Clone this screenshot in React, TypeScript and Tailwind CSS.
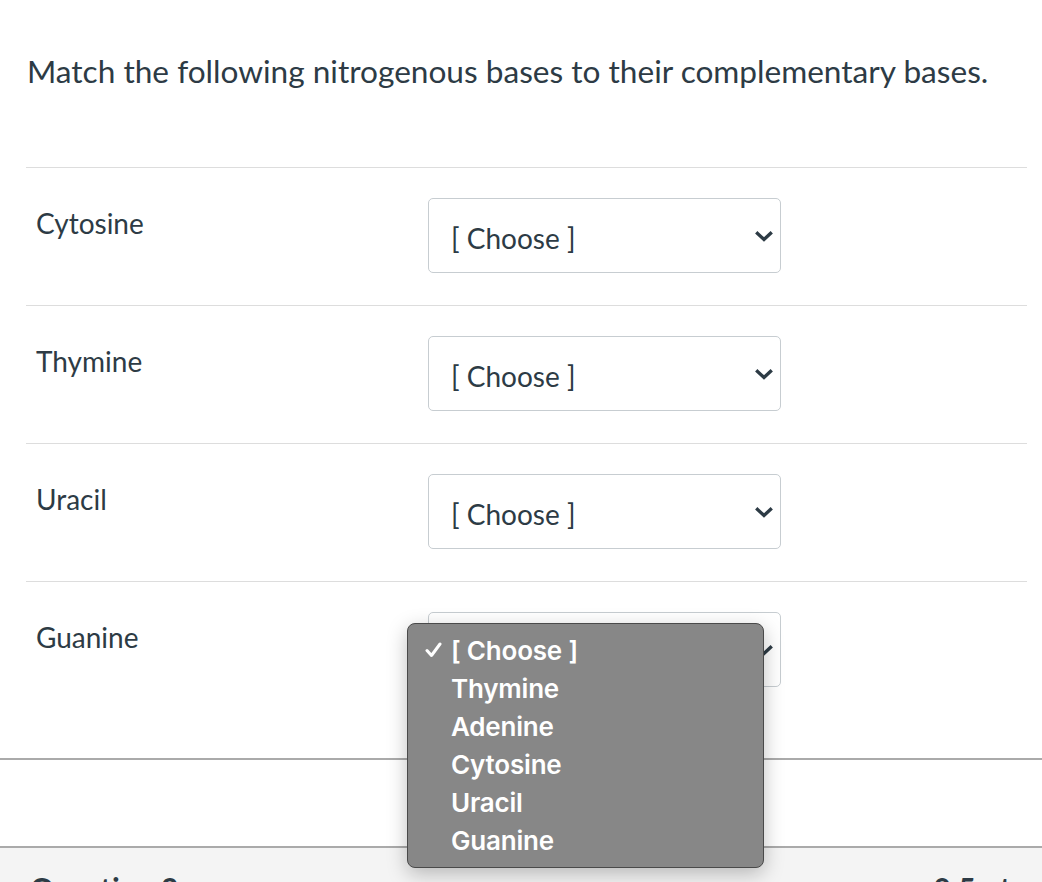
const rows = ["Cytosine", "Thymine", "Uracil", "Guanine"]
const options = ["[ Choose ]", "Thymine", "Adenine", "Cytosine", "Uracil", "Guanine"]

function Chevron() {
    return (
        <svg width="18" height="11" viewBox="0 0 18 11" className="text-[#2d3b45]">
            <path d="M2.5 2.5 L9 8.5 L15.5 2.5" fill="none" stroke="currentColor" strokeWidth="3.4" strokeLinecap="square" />
        </svg>
    )
}

function SelectBox() {
    return (
        <div className="flex items-center justify-between w-[353px] h-[75px] border border-[#c7cdd1] rounded-[5px] bg-white pl-[22px] pr-[7px]">
            <span className="text-[28px] leading-[36px] text-[#2d3b45] pt-[4px]">[ Choose ]</span>
            <span className="pt-[2px]">
                <Chevron />
            </span>
        </div>
    )
}

export default function App() {
    return (
        <div className="relative w-[1042px] h-[882px] overflow-hidden bg-white text-[#2d3b45] font-['Lato',sans-serif]">
            <div className="px-[26px] pt-[49px]">
                <h1 className="text-[31.6px] leading-[44px] pl-px">
                    Match the following nitrogenous bases to their complementary bases.
                </h1>
                <div className="mt-[74px] w-[1001px]">
                    {rows.map((label) => (
                        <div key={label} className="flex border-t border-[#dddddd] pt-[30px] pb-[32px] h-[138px]">
                            <div className="w-[402px] pl-[10px] pt-[7px] text-[28px] leading-[36px]">{label}</div>
                            <SelectBox />
                        </div>
                    ))}
                </div>
            </div>

            <div className="absolute left-0 right-0 top-[758px] h-[89px] border-t-2 border-[#aaaaaa] bg-white" />
            <div className="absolute left-0 right-0 top-[846px] bottom-0 border-t-2 border-[#aaaaaa] bg-[#f4f4f4] flex justify-between px-[30px] pt-[25px]">
                <span className="text-[30px] font-bold leading-none">Question 2</span>
                <span className="text-[30px] font-bold leading-none text-[#2d3b45] mr-[-12px]">0.5 pts</span>
            </div>

            <div className="absolute left-[407px] top-[623px] w-[357px] h-[245px] rounded-[8px] border border-[#4a4a4a] bg-[#878787] shadow-[0_6px_20px_rgba(0,0,0,0.25)] pt-[7px] font-['Inter',sans-serif]">
                {options.map((opt, i) => (
                    <div key={opt} className="flex items-center h-[38px] text-white text-[26px] font-semibold tracking-[-0.2px]">
                        <span className="w-[43px] flex justify-end pr-[9px]">
                            {i === 0 && (
                                <svg width="17" height="16" viewBox="0 0 17 16">
                                    <path d="M2 8.5 L6.5 13.5 L15 2" fill="none" stroke="white" strokeWidth="3" strokeLinecap="round" strokeLinejoin="round" />
                                </svg>
                            )}
                        </span>
                        <span>{opt}</span>
                    </div>
                ))}
            </div>
        </div>
    )
}
